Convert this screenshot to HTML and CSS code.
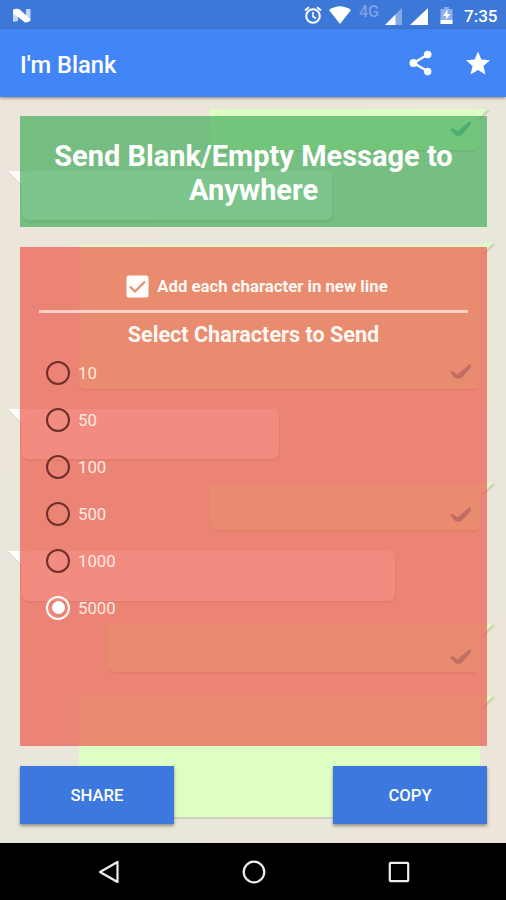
FILE: index.html
```html
<!DOCTYPE html>
<html lang="en">
<head>
<meta charset="utf-8">
<title>I'm Blank</title>
<link rel="stylesheet" href="styles.css">
</head>
<body>
<div class="screen">
  <header class="status">
    <svg class="status-n" width="20" height="16" viewBox="0 0 20 16"><path d="M1 2l5-1v12l-5 1zM14 1h4.500v12L14 14z" fill="#c3d4f5"/><path d="M1 2Q3 0 7 1l7 6 4.500 4.500Q18 14 13 14.500L6 9 1 6z" fill="#fff"/></svg>
    <div class="status-icons">
      <svg class="alarm" width="20" height="20" viewBox="0 0 20 20" fill="none" stroke="#fff"><circle cx="10" cy="11" r="6.800" stroke-width="2"/><path d="M10 7v4.500l3 2" stroke-width="1.600"/><path d="M2 5.500L6 2.200M18 5.500L14 2.200" stroke-width="2"/></svg>
      <svg class="wifi" width="22" height="18" viewBox="0 0 22 18"><path d="M0 4Q11-3.500 22 4L11 18z" fill="#fff"/></svg>
      <span class="network">4G</span>
      <svg class="signal" width="18" height="17" viewBox="0 0 18 17"><path d="M17 0v17H0z" fill="#86a9e7"/><path d="M10.500 6.500V17H0z" fill="#fff"/></svg>
      <svg class="signal-full" width="18" height="17" viewBox="0 0 18 17"><path d="M18 0v17H0z" fill="#fff"/></svg>
      <svg class="battery" width="13" height="17" viewBox="0 0 13 17"><path d="M4 0h5v2h3.500v15H.5V2H4z" fill="#8fafea"/><path d="M.5 13h12v4H.5z" fill="#fff"/><path d="M7.500 2.500L3 9h3v3.500L10.500 7H7.500z" fill="#fff"/></svg>
      <span class="clock">7:35</span>
    </div>
  </header>
  <div class="appbar">
    <h1>I'm Blank</h1>
    <svg class="share-icon" width="24" height="26" viewBox="0 0 24 26"><path d="M19 4.500L4.500 13 19 21.500" fill="none" stroke="#fff" stroke-width="2.400"/><circle cx="18.700" cy="4.500" r="3.800" fill="#fff"/><circle cx="4.400" cy="13" r="3.900" fill="#fff"/><circle cx="18.700" cy="21.500" r="3.700" fill="#fff"/></svg>
    <svg class="star-icon" width="24" height="24" viewBox="2 2 20 19"><path d="M12 17.270L18.180 21l-1.640-7.030L22 9.240l-7.190-.61L12 2 9.190 8.630 2 9.240l5.460 4.730L5.820 21z" fill="#fff"/></svg>
  </div>
  <main class="content">
    <svg class="wallpaper" width="506" height="746" viewBox="0 97 506 746">
      <defs>
        <linearGradient id="sand" x2="1" y2="1"><stop offset="0" stop-color="#ede4da"/><stop offset=".5" stop-color="#e9e7db"/><stop offset="1" stop-color="#ece5da"/></linearGradient>
        <g id="tail-in"><path d="M0 0h16v14h-2z" fill="#fffefa"/><path d="M0 1l14 14" stroke="#dbd6c9" stroke-width="1"/></g>
        <g id="tail-out"><path d="M0 0h9L0 9z" fill="#deffc1"/><path d="M11 1L0 12" stroke="#c9d3b0" stroke-width="1.800"/></g>
        <path id="tick" d="M0 8l2.500-1 5 3.500L18.500 1l2.500-1-.5 4L11.500 14 8 15 5 14z"/>
      </defs>
      <rect y="97" width="506" height="746" fill="url(#sand)"/>
      <g fill="#d3d0c0">
        <rect x="210" y="112" width="270" height="40" rx="7"/>
        <rect x="22" y="174" width="311" height="49" rx="7"/>
        <rect x="79" y="250" width="401" height="141" rx="7"/>
        <rect x="22" y="412" width="258" height="49" rx="7"/>
        <rect x="210" y="490" width="270" height="42" rx="7"/>
        <rect x="22" y="554" width="374" height="49" rx="7"/>
        <rect x="108" y="630" width="372" height="44" rx="7"/>
        <rect x="79" y="700" width="401" height="119" rx="7"/>
      </g>
      <g fill="#deffc3">
        <path d="M210 109h275l-5 8v27q0 6-6 6H217q-7 0-7-7z"/>
        <path d="M79 245h404l-3 6v132q0 6-6 6H86q-7 0-7-7z"/>
        <path d="M210 484h274l-4 6v34q0 6-6 6H217q-7 0-7-7z"/>
        <path d="M108 625h375l-3 6v35q0 6-6 6H115q-7 0-7-7z"/>
        <path d="M79 696h404l-3 6v109q0 6-6 6H86q-7 0-7-7z"/>
      </g>
      <g fill="#fffefa">
        <rect x="22" y="171" width="310" height="49" rx="7"/>
        <rect x="22" y="409" width="257" height="50" rx="7"/>
        <rect x="22" y="551" width="373" height="50" rx="7"/>
      </g>
      <use href="#tail-in" x="8" y="171"/><use href="#tail-in" x="8" y="409"/><use href="#tail-in" x="8" y="551"/>
      <use href="#tail-out" x="478" y="109"/><use href="#tail-out" x="483" y="243"/><use href="#tail-out" x="483" y="483"/><use href="#tail-out" x="483" y="624"/><use href="#tail-out" x="483" y="696"/>
      <use href="#tick" x="450" y="121" fill="#5fb0b0"/>
      <g fill="#5c9c9c"><use href="#tick" x="450" y="364"/><use href="#tick" x="450" y="507"/><use href="#tick" x="450" y="649"/></g>
    </svg>
    <section class="banner"><h2>Send Blank/Empty Message to Anywhere</h2></section>
    <section class="panel">
      <div class="check-row">
        <svg width="23" height="23" viewBox="0 0 23 23"><rect x=".5" y=".5" width="22" height="22" rx="2.500" fill="#fffdfa"/><path d="M4 11.500l5 5L19 6.500" fill="none" stroke="#e58e6d" stroke-width="2.200"/></svg>
        <span>Add each character in new line</span>
      </div>
      <div class="rule"></div>
      <h3>Select Characters to Send</h3>
      <ul class="options">
        <li><i class="radio"></i>10</li>
        <li><i class="radio"></i>50</li>
        <li><i class="radio"></i>100</li>
        <li><i class="radio"></i>500</li>
        <li><i class="radio"></i>1000</li>
        <li><i class="radio on"></i>5000</li>
      </ul>
    </section>
    <div class="actions">
      <button>SHARE</button>
      <button>COPY</button>
    </div>
  </main>
  <nav class="navbar">
    <svg width="24" height="26" viewBox="0 0 24 26"><path d="M20.500 3v20L3 13z" fill="none" stroke="#eee" stroke-width="2.200" stroke-linejoin="round"/></svg>
    <svg width="24" height="26" viewBox="0 0 24 26"><circle cx="12" cy="13" r="10.300" fill="none" stroke="#eee" stroke-width="2.200"/></svg>
    <svg width="24" height="26" viewBox="0 0 24 26"><rect x="2.800" y="3.800" width="18.400" height="18.400" rx="1" fill="none" stroke="#eee" stroke-width="2.200"/></svg>
  </nav>
</div>
</body>
</html>
```
FILE: styles.css
```css
* { box-sizing: border-box; margin: 0; padding: 0; }
body { font-family: Roboto, "Liberation Sans", sans-serif; color: #fff; }
svg { display: block; flex: none; }
.screen { width: 506px; height: 900px; display: flex; flex-direction: column; overflow: hidden; }

.status { height: 29px; background: #3c78d8; display: flex; justify-content: space-between; padding: 0 9px 0 12px; }
.status-n { margin-top: 8px; }
.status-icons { display: flex; align-items: flex-start; }
.alarm { margin-top: 5px; }
.wifi { margin: 6px 0 0 6px; }
.network { width: 21px; margin: 3px 0 0 8px; font-size: 16px; line-height: 18px; font-weight: 500; color: #7ea3e6; }
.signal { margin: 8px 0 0 5px; }
.signal-full { margin: 8px 0 0 7px; }
.battery { margin: 7px 0 0 12px; }
.clock { width: 33px; margin-left: 11px; font-size: 17px; line-height: 32px; font-weight: 500; white-space: nowrap; }

.appbar { height: 68px; background: #4285f6; display: flex; align-items: center; padding: 0 16px 0 20px; position: relative; z-index: 1; box-shadow: 0 1px 3px rgba(70, 60, 40, .6); }
.appbar h1 { flex: 1; font-size: 23.700px; font-weight: 500; line-height: 28px; padding-top: 3px; }
.share-icon { margin-right: 33px; }

.content { flex: 1; position: relative; display: flex; flex-direction: column; gap: 20px; padding: 19px 19px 19px 20px; }
.wallpaper { position: absolute; left: 0; top: 0; }
.banner, .panel, .actions { position: relative; }
.banner { height: 111px; background: rgba(68, 173, 93, .7); display: flex; align-items: center; justify-content: center; text-align: center; }
.banner h2 { width: 420px; font-size: 29px; line-height: 34px; font-weight: 700; padding-top: 3px; }
.panel { height: 499px; background: rgba(236, 90, 76, .7); padding: 27px 19px 0; }
.check-row { height: 24px; display: flex; align-items: center; justify-content: center; gap: 8px; padding-left: 7px; font-size: 16.750px; font-weight: 700; color: #fff8f3; }
.rule { height: 3px; margin-top: 12px; background: #fbd1c5; }
.panel h3 { margin-top: 8px; text-align: center; font-size: 21.600px; line-height: 28px; font-weight: 700; color: #fff8f3; }
.options { list-style: none; margin-top: 1px; padding-left: 7px; }
.options li { height: 46.900px; display: flex; align-items: center; gap: 8px; font-size: 16.800px; color: #ffe9e2; }
.radio { width: 24px; height: 24px; border: 2.500px solid #6d2f29; border-radius: 50%; display: flex; align-items: center; justify-content: center; }
.radio.on { border-color: #fff; }
.radio.on::after { content: ""; width: 13px; height: 13px; border-radius: 50%; background: #fff; }
.actions { display: flex; justify-content: space-between; }
.actions button { width: 154px; height: 58px; border: 0; background: #3c78de; color: #fff; font: 500 16.700px Roboto, "Liberation Sans", sans-serif; padding-top: 1px; box-shadow: 0 2px 3px rgba(60, 55, 45, .5); }

.navbar { height: 57px; background: #000; display: flex; align-items: center; justify-content: space-between; padding: 0 95px 0 97px; }
```
